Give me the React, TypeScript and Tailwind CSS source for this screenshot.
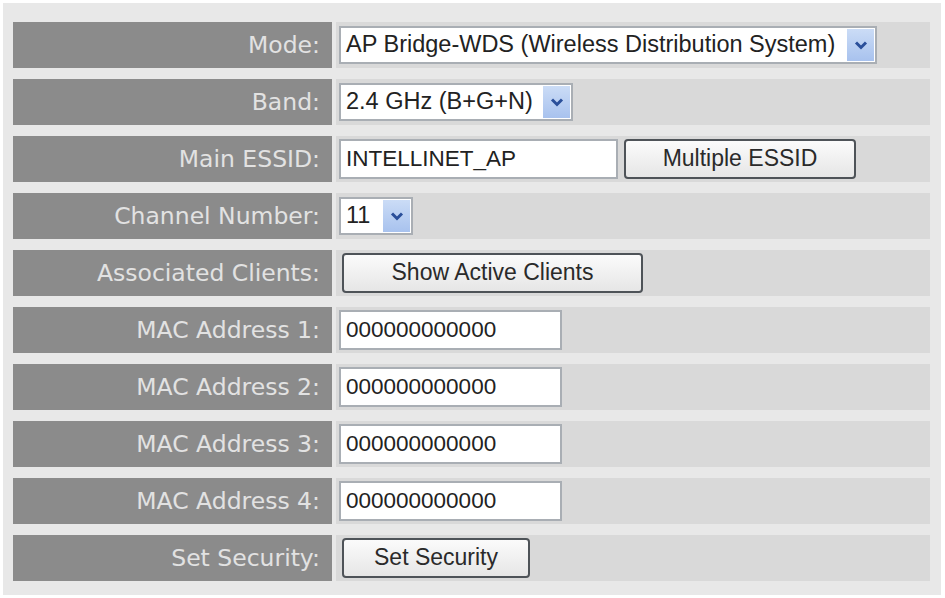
import React from "react";

const labelFont = { fontFamily: '"DejaVu Sans", sans-serif' };
const ctrlFont = { fontFamily: '"Liberation Sans", Arial, sans-serif' };

function Arrow() {
  return (
    <span className="flex h-[32px] w-[27px] items-center justify-center bg-gradient-to-b from-[#cbdcf6] to-[#a8c2ee]">
      <svg width="14" height="10" viewBox="0 0 14 10">
        <path d="M2 2.5 L7 7.5 L12 2.5" fill="none" stroke="#2a4f9a" strokeWidth="3" />
      </svg>
    </span>
  );
}

function Select({ text, width }: { text: string; width: string }) {
  return (
    <div
      className={`flex h-[38px] items-center justify-between border-2 border-[#a9aeb4] bg-white pl-[5px] pr-[1px] text-[23.5px] text-[#222] ${width}`}
      style={ctrlFont}
    >
      <span className="whitespace-nowrap">{text}</span>
      <Arrow />
    </div>
  );
}

function TextBox({ value, width }: { value: string; width: string }) {
  return (
    <div
      className={`flex h-[40px] items-center border-2 border-[#a9aeb4] bg-white pl-[5px] text-[22.5px] text-[#222] ${width}`}
      style={ctrlFont}
    >
      {value}
    </div>
  );
}

function Button({ text, width }: { text: string; width: string }) {
  return (
    <div
      className={`ml-[3px] flex h-[40px] items-center justify-center rounded-[4px] border-2 border-[#4e5358] bg-gradient-to-b from-[#fbfbfb] to-[#e6e6e6] pb-[2px] text-[23px] text-[#2a2a2a] ${width}`}
      style={ctrlFont}
    >
      {text}
    </div>
  );
}

const rows: { label: string; content: React.ReactNode }[] = [
  { label: "Mode:", content: <Select text="AP Bridge-WDS (Wireless Distribution System)" width="w-[538px]" /> },
  { label: "Band:", content: <Select text="2.4 GHz (B+G+N)" width="w-[234px]" /> },
  {
    label: "Main ESSID:",
    content: (
      <div className="flex items-center gap-[3px]">
        <TextBox value="INTELLINET_AP" width="w-[279px]" />
        <Button text="Multiple ESSID" width="w-[232px]" />
      </div>
    ),
  },
  { label: "Channel Number:", content: <Select text="11" width="w-[74px]" /> },
  { label: "Associated Clients:", content: <Button text="Show Active Clients" width="w-[301px]" /> },
  { label: "MAC Address 1:", content: <TextBox value="000000000000" width="w-[223px]" /> },
  { label: "MAC Address 2:", content: <TextBox value="000000000000" width="w-[223px]" /> },
  { label: "MAC Address 3:", content: <TextBox value="000000000000" width="w-[223px]" /> },
  { label: "MAC Address 4:", content: <TextBox value="000000000000" width="w-[223px]" /> },
  { label: "Set Security:", content: <Button text="Set Security" width="w-[188px]" /> },
];

export default function App() {
  return (
    <div className="h-[598px] w-[945px] bg-white p-[3px]">
      <div className="flex h-full w-[938px] flex-col gap-[11px] bg-[#e8e8e8] pl-[10px] pr-[11px] pt-[19px]">
        {rows.map((r) => (
          <div key={r.label} className="flex h-[46px] gap-[4px]">
            <div
              className="flex w-[319px] items-center justify-end whitespace-nowrap bg-[#8b8b8b] pr-[12px] pt-[2px] text-[23.5px] text-[#e2e2e2]"
              style={labelFont}
            >
              {r.label}
            </div>
            <div className="flex flex-1 items-center bg-[#d9d9d9] pl-[3px]">{r.content}</div>
          </div>
        ))}
      </div>
    </div>
  );
}
